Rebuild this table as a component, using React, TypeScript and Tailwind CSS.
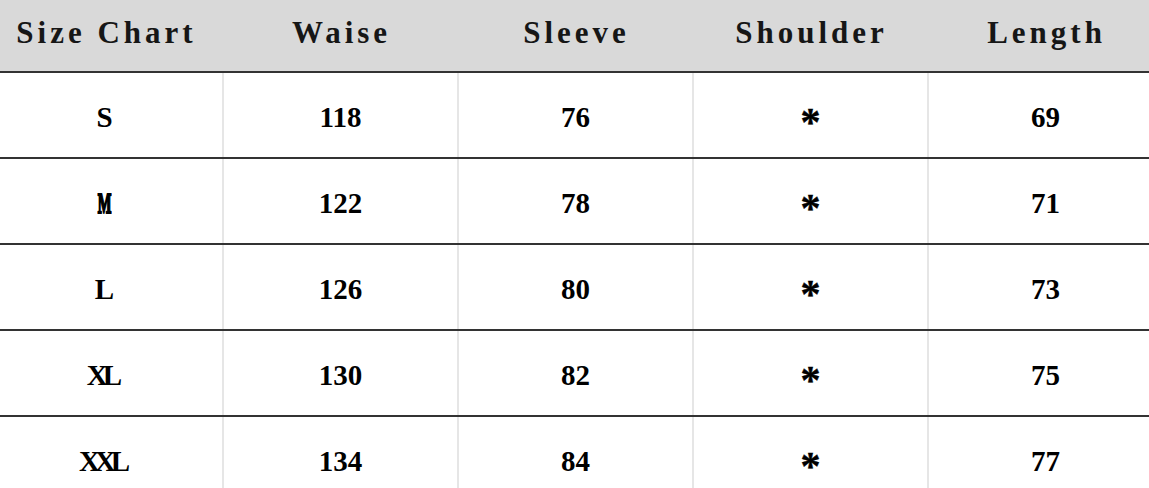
import * as React from "react";

const headers = ["Size Chart", "Waise", "Sleeve", "Shoulder", "Length"];

const rows = [
  ["S", "118", "76", "*", "69"],
  ["M", "122", "78", "*", "71"],
  ["L", "126", "80", "*", "73"],
  ["XL", "130", "82", "*", "75"],
  ["XXL", "134", "84", "*", "77"],
];

function Cell({ value, first }: { value: string; first: boolean }) {
  let content: React.ReactNode = value;
  if (value === "*") {
    content = (
      <span className="inline-block h-[20px] translate-y-[4px] text-[40px] leading-[40px] [-webkit-text-stroke:0.5px_#000]">
        *
      </span>
    );
  } else if (value === "M") {
    content = <span className="inline-block scale-x-[0.5] [-webkit-text-stroke:2px_#000]">M</span>;
  } else if (value === "XL" || value === "XXL") {
    content = <span className="inline-block tracking-[-5px] pr-[5px]">{value}</span>;
  }
  return (
    <div
      className={
        "flex h-[84px] items-center justify-center pt-[4px] " +
        (first ? "" : "border-l-2 border-[#e6e6e6]")
      }
    >
      <span className="text-[29px] font-bold leading-none text-black">{content}</span>
    </div>
  );
}

export default function App() {
  return (
    <div className="h-[488px] w-[1149px] overflow-hidden bg-white">
      <div
        className="-ml-[13px] w-[1175px]"
        style={{ fontFamily: '"Liberation Serif", "Noto Sans CJK SC", serif' }}
      >
        <div className="grid h-[71px] grid-cols-5 bg-[#d9d9d9]">
          {headers.map((h) => (
            <div key={h} className="flex items-center justify-center pb-[5px] pl-[4px]">
              <span className="text-[31px] font-bold tracking-[4px] text-[#161616]">{h}</span>
            </div>
          ))}
        </div>
        {rows.map((r, i) => (
          <div key={i}>
            <div className="h-[2px] bg-[#333]" />
            <div className="grid grid-cols-5">
              {r.map((v, j) => (
                <Cell key={j} value={v} first={j === 0} />
              ))}
            </div>
          </div>
        ))}
      </div>
    </div>
  );
}
